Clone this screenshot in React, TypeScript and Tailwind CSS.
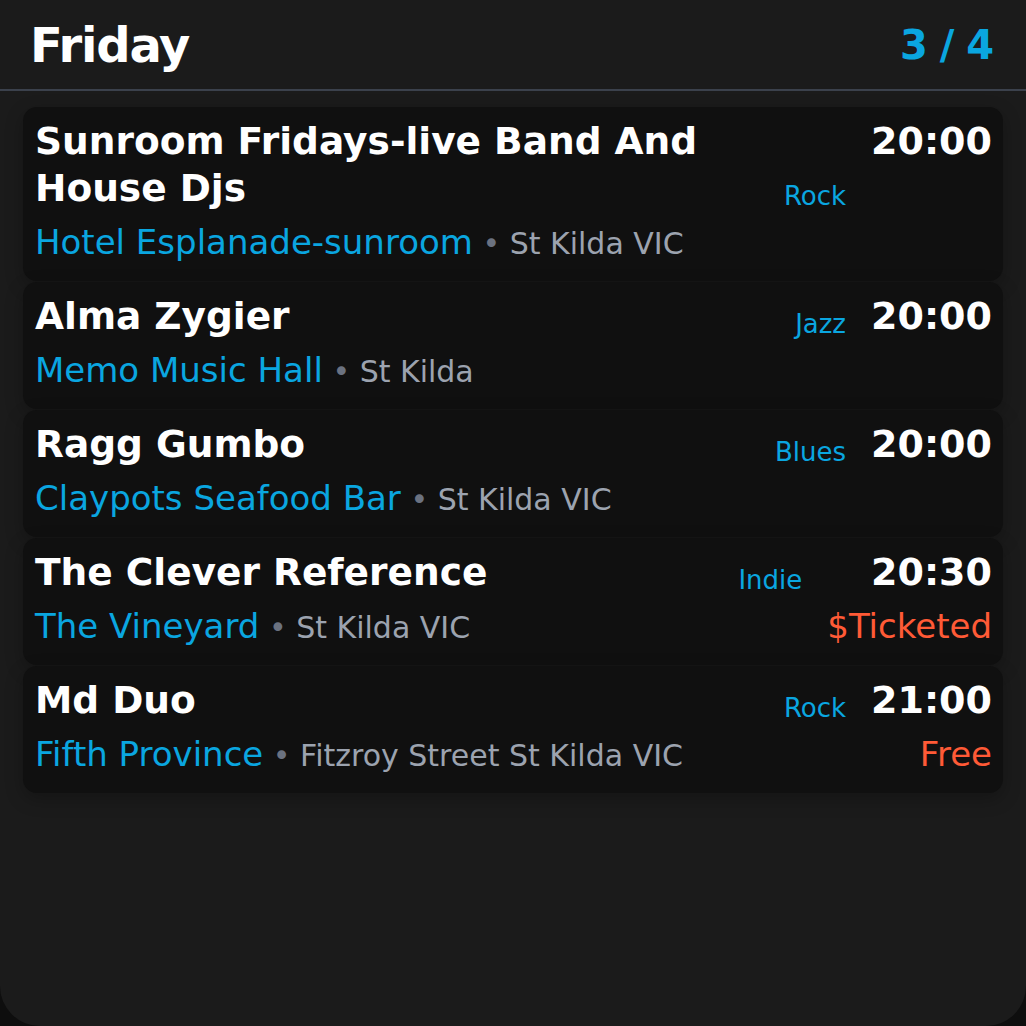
import React from 'react';

type Gig = {
  title: string;
  venue: string;
  location: string;
  genre: string;
  time: string;
  price?: string;
};

const gigs: Gig[] = [
  {
    title: 'Sunroom Fridays-live Band And House Djs',
    venue: 'Hotel Esplanade-sunroom',
    location: 'St Kilda VIC',
    genre: 'Rock',
    time: '20:00',
  },
  { title: 'Alma Zygier', venue: 'Memo Music Hall', location: 'St Kilda', genre: 'Jazz', time: '20:00' },
  { title: 'Ragg Gumbo', venue: 'Claypots Seafood Bar', location: 'St Kilda VIC', genre: 'Blues', time: '20:00' },
  {
    title: 'The Clever Reference',
    venue: 'The Vineyard',
    location: 'St Kilda VIC',
    genre: 'Indie',
    time: '20:30',
    price: '$Ticketed',
  },
  {
    title: 'Md Duo',
    venue: 'Fifth Province',
    location: 'Fitzroy Street St Kilda VIC',
    genre: 'Rock',
    time: '21:00',
    price: 'Free',
  },
];

const GigCard: React.FC<{ gig: Gig }> = ({ gig }) => (
  <div className="flex gap-[25px] rounded-[14px] bg-[#101010] pl-3 pr-[11px] pt-[11px] pb-[12px] shadow-[0_6px_18px_rgba(0,0,0,0.25)]">
    {/* Title, genre and venue */}
    <div className="min-w-0 flex-1">
      <div className="flex items-end gap-[25px]">
        <div className="min-w-0 flex-1 text-[37.5px] font-bold leading-[47px] text-white">{gig.title}</div>
        <div className="text-[26px] leading-[32px] text-[#0aa6e0]">{gig.genre}</div>
      </div>
      <div className="mt-[5px] whitespace-nowrap text-[34px] leading-[51px] text-[#0aa6e0]">
        {gig.venue}
        <span className="text-[30px] text-[#9ca3af]">
          {' '}
          <span className="text-[#6b7280]">•</span> {gig.location}
        </span>
      </div>
    </div>

    {/* Time and price */}
    <div className="flex flex-col items-end">
      <div className="text-[38px] font-bold leading-[47px] text-white">{gig.time}</div>
      {gig.price && (
        <div className="mt-[5px] whitespace-nowrap text-[34px] leading-[51px] text-[#ff5a36]">{gig.price}</div>
      )}
    </div>
  </div>
);

const App: React.FC = () => {
  return (
    <div className="h-[1026px] w-[1026px] bg-[#0e0e0e] font-['DejaVu_Sans',sans-serif]">
      <div className="h-full overflow-hidden rounded-b-[40px] bg-[#1b1b1b]">
        {/* Header */}
        <div className="flex h-[89px] items-center justify-between pl-[30px] pr-[33px]">
          <h1 className="text-[48px] font-bold leading-none tracking-tight text-white">Friday</h1>
          <span className="text-[40px] font-bold leading-none tracking-tight text-[#0aa6e0]">3 / 4</span>
        </div>
        <div className="h-[2px] bg-[#3b414c]" />

        {/* Gig list */}
        <div className="flex flex-col gap-px px-[23px] pt-[16px]">
          {gigs.map((gig, i) => (
            <GigCard key={i} gig={gig} />
          ))}
        </div>
      </div>
    </div>
  );
};

export default App;
